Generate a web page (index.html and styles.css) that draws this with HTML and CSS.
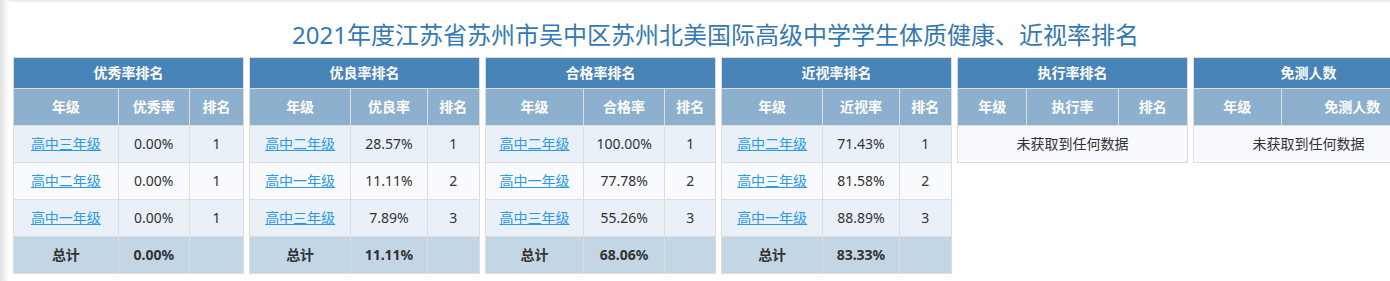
FILE: index.html
```html
<!DOCTYPE html>
<html lang="zh-CN">
<head>
<meta charset="utf-8">
<title>排名</title>
<link rel="stylesheet" href="styles.css">
</head>
<body>
<div class="page">
  <h1 class="title">2021年度江苏省苏州市吴中区苏州北美国际高级中学学生体质健康、近视率排名</h1>
  <div class="panels">
    <table class="rank">
      <thead>
        <tr><th class="cap" colspan="3">优秀率排名</th></tr>
        <tr class="colhead"><th>年级</th><th>优秀率</th><th>排名</th></tr>
      </thead>
      <tbody>
        <tr class="odd"><td><a href="#">高中三年级</a></td><td>0.00%</td><td>1</td></tr>
        <tr class="even"><td><a href="#">高中二年级</a></td><td>0.00%</td><td>1</td></tr>
        <tr class="odd"><td><a href="#">高中一年级</a></td><td>0.00%</td><td>1</td></tr>
        <tr class="total"><td>总计</td><td>0.00%</td><td></td></tr>
      </tbody>
    </table>
    <table class="rank">
      <thead>
        <tr><th class="cap" colspan="3">优良率排名</th></tr>
        <tr class="colhead"><th>年级</th><th>优良率</th><th>排名</th></tr>
      </thead>
      <tbody>
        <tr class="odd"><td><a href="#">高中二年级</a></td><td>28.57%</td><td>1</td></tr>
        <tr class="even"><td><a href="#">高中一年级</a></td><td>11.11%</td><td>2</td></tr>
        <tr class="odd"><td><a href="#">高中三年级</a></td><td>7.89%</td><td>3</td></tr>
        <tr class="total"><td>总计</td><td>11.11%</td><td></td></tr>
      </tbody>
    </table>
    <table class="rank">
      <thead>
        <tr><th class="cap" colspan="3">合格率排名</th></tr>
        <tr class="colhead"><th>年级</th><th>合格率</th><th>排名</th></tr>
      </thead>
      <tbody>
        <tr class="odd"><td><a href="#">高中二年级</a></td><td>100.00%</td><td>1</td></tr>
        <tr class="even"><td><a href="#">高中一年级</a></td><td>77.78%</td><td>2</td></tr>
        <tr class="odd"><td><a href="#">高中三年级</a></td><td>55.26%</td><td>3</td></tr>
        <tr class="total"><td>总计</td><td>68.06%</td><td></td></tr>
      </tbody>
    </table>
    <table class="rank">
      <thead>
        <tr><th class="cap" colspan="3">近视率排名</th></tr>
        <tr class="colhead"><th>年级</th><th>近视率</th><th>排名</th></tr>
      </thead>
      <tbody>
        <tr class="odd"><td><a href="#">高中二年级</a></td><td>71.43%</td><td>1</td></tr>
        <tr class="even"><td><a href="#">高中三年级</a></td><td>81.58%</td><td>2</td></tr>
        <tr class="odd"><td><a href="#">高中一年级</a></td><td>88.89%</td><td>3</td></tr>
        <tr class="total"><td>总计</td><td>83.33%</td><td></td></tr>
      </tbody>
    </table>
    <table class="rank">
      <thead>
        <tr><th class="cap" colspan="3">执行率排名</th></tr>
        <tr class="colhead"><th>年级</th><th>执行率</th><th>排名</th></tr>
      </thead>
      <tbody>
        <tr class="empty"><td colspan="3">未获取到任何数据</td></tr>
      </tbody>
    </table>
    <table class="rank">
      <thead>
        <tr><th class="cap" colspan="2">免测人数</th></tr>
        <tr class="colhead"><th>年级</th><th>免测人数</th></tr>
      </thead>
      <tbody>
        <tr class="empty"><td colspan="2">未获取到任何数据</td></tr>
      </tbody>
    </table>
  </div>
</div>
</body>
</html>
```

FILE: styles.css
```css
html, body {
  margin: 0;
  padding: 0;
}
body {
  background: #fff linear-gradient(to right, #e2e2e2 0, #f2f2f2 5px, #fff 9px) no-repeat;
  background-size: 9px 100%;
  min-height: 281px;
  font-family: "Noto Sans", "Noto Sans CJK SC", sans-serif;
  font-size: 14px;
  color: #333;
  overflow: hidden;
}
.page {
  display: inline-flex;
  flex-direction: column;
  margin-left: 9px;
  padding-left: 4px;
  border-top: 2px solid #eeeeee;
  min-width: 1381px;
}
.title {
  margin: 0;
  padding: 16px 6px 0 0;
  height: 39px;
  text-align: center;
  font-size: 24px;
  line-height: 34px;
  font-weight: normal;
  color: #3579b1;
  white-space: nowrap;
}
.panels {
  display: flex;
  gap: 5px;
  align-items: flex-start;
}
.rank {
  flex: 0 0 231px;
  width: 231px;
  border-collapse: collapse;
  border: 1px solid #dddddd;
}
.rank th, .rank td {
  border: 1px solid #dddddd;
  padding: 8px;
  line-height: 20px;
  text-align: center;
  white-space: nowrap;
}
.rank th.cap {
  background: #4884b7;
  color: #fff;
  font-weight: bold;
  padding: 5px 8px;
}
.colhead th {
  background: #8db0cf;
  color: #fff;
  font-weight: bold;
}
.odd td {
  background: #e9f0f8;
}
.even td {
  background: #f8fafe;
}
.empty td {
  background: #f8f9fe;
}
.total td {
  background: #c3d6e6;
  font-weight: bold;
}
.rank a {
  color: #2a9ae6;
  text-decoration: underline;
}
```
